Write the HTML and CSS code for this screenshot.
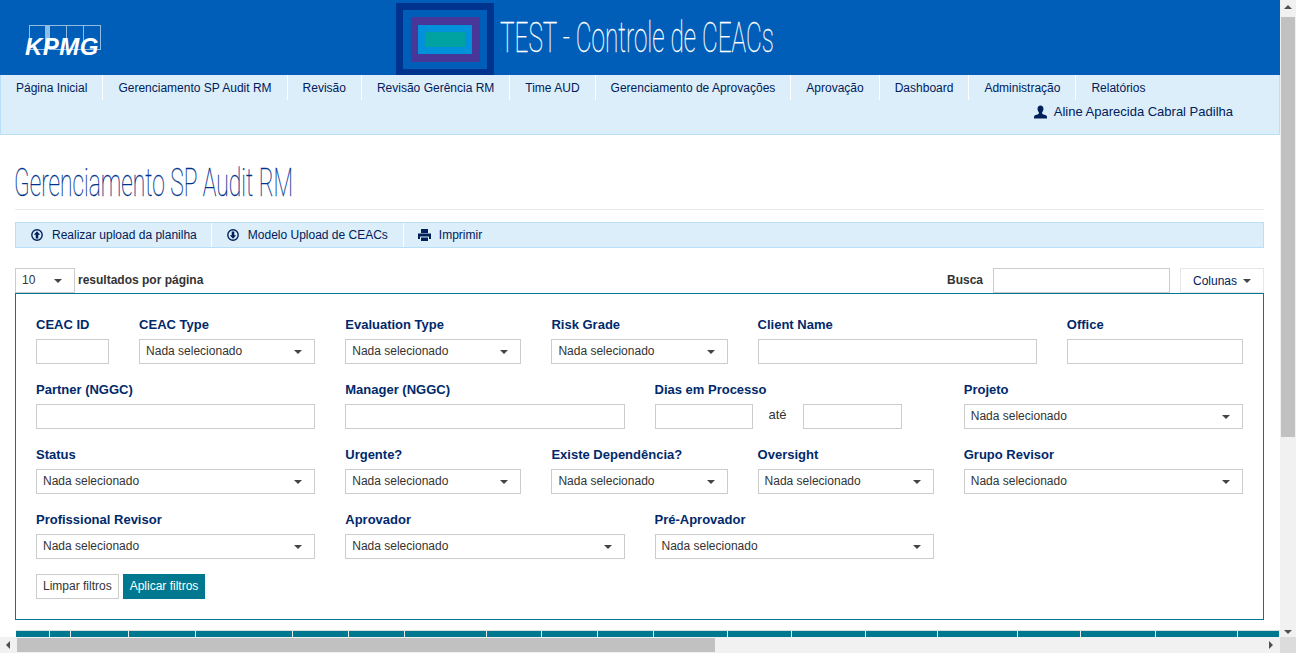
FILE: index.html

```html
<!DOCTYPE html>
<html lang="pt-BR">
<head>
  <meta charset="UTF-8" />
  <title>TEST - Controle de CEACs</title>
  <link rel="stylesheet" href="styles.css">
</head>
<body>
  <div class="page">
    <header class="top">
      <svg class="kpmg" width="80" height="36" viewBox="0 0 80 36">
        <rect x="4.5" y="0.5" width="16" height="24" fill="none" stroke="#8fbde6"/>
        <rect x="20" y="0" width="4" height="24" fill="#8fbde6"/>
        <rect x="24.5" y="0.5" width="17" height="24" fill="none" stroke="#8fbde6"/>
        <rect x="41.5" y="0.5" width="17" height="24" fill="none" stroke="#8fbde6"/>
        <rect x="58.5" y="0.5" width="17" height="24" fill="none" stroke="#8fbde6"/>
        <text x="0" y="30" class="kpmg-text">KPMG</text>
      </svg>
      <svg class="mark" width="98" height="72" viewBox="0 0 98 72">
        <rect width="98" height="72" fill="#00338d"/>
        <rect x="7" y="7" width="84" height="59" fill="#005eb8"/>
        <rect x="15" y="14" width="69" height="45" fill="#483698"/>
        <rect x="22" y="22" width="54" height="29" fill="#0091da"/>
        <rect x="29" y="29" width="40" height="15" fill="#00a3a1"/>
      </svg>
      <div class="app-title"><span>TEST - Controle de CEACs</span></div>
    </header>

    <nav class="menu">
      <ul class="menu-list">
        <li>Página Inicial</li>
        <li>Gerenciamento SP Audit RM</li>
        <li>Revisão</li>
        <li>Revisão Gerência RM</li>
        <li>Time AUD</li>
        <li>Gerenciamento de Aprovações</li>
        <li>Aprovação</li>
        <li>Dashboard</li>
        <li>Administração</li>
        <li>Relatórios</li>
      </ul>
      <div class="user">
        <svg width="13" height="14" viewBox="0 0 14 14"><path fill="#00205b" d="M7 0c2 0 3.200 1.500 3.200 3.600 0 1.500-.6 2.900-1.400 3.700v1.200c0 .5 1.200 1 2.400 1.500 1.300.5 2.800 1 2.800 2V14H0v-2c0-1 1.500-1.500 2.800-2 1.200-.5 2.400-1 2.400-1.500V7.300C4.400 6.500 3.800 5.100 3.800 3.600 3.800 1.500 5 0 7 0z"/></svg>
        <span>Aline Aparecida Cabral Padilha</span>
      </div>
    </nav>

    <main class="content">
      <h1 class="page-title"><span>Gerenciamento SP Audit RM</span></h1>

      <div class="toolbar">
        <a class="tool tool-upload">
          <svg width="12" height="12" viewBox="0 0 12 12"><circle cx="6" cy="6" r="5.200" fill="none" stroke="#00205b" stroke-width="1.400"/><path fill="#00205b" d="M6 2.200 9.200 5.800H7.300V9.400H4.700V5.800H2.800z"/></svg>
          Realizar upload da planilha
        </a>
        <a class="tool">
          <svg width="12" height="12" viewBox="0 0 12 12"><circle cx="6" cy="6" r="5.200" fill="none" stroke="#00205b" stroke-width="1.400"/><path fill="#00205b" d="M6 9.800 2.800 6.200H4.700V2.600H7.300V6.200H9.200z"/></svg>
          Modelo Upload de CEACs
        </a>
        <a class="tool tool-print">
          <svg width="13" height="12" viewBox="0 0 13 12"><path fill="#00205b" d="M3 0h7v4H3zM0 4.500h13V10h-2V7.500H2V10H0zM3 8.500h7V12H3z"/></svg>
          Imprimir
        </a>
      </div>

      <div class="table-top">
        <div class="length">
          <div class="picker picker-length"><span>10</span><i class="caret"></i></div>
          <span class="length-label">resultados por página</span>
        </div>
        <div class="search">
          <label class="search-label">Busca</label>
          <input class="text-input search-input" type="text">
          <button class="columns-btn">Colunas <i class="caret"></i></button>
        </div>
      </div>

      <section class="filters">
        <div class="filter-grid">
          <div class="field span1"><label>CEAC ID</label><input class="text-input" type="text"></div>
          <div class="field span2"><label>CEAC Type</label><div class="picker"><span>Nada selecionado</span><i class="caret"></i></div></div>
          <div class="field span2"><label>Evaluation Type</label><div class="picker"><span>Nada selecionado</span><i class="caret"></i></div></div>
          <div class="field span2"><label>Risk Grade</label><div class="picker"><span>Nada selecionado</span><i class="caret"></i></div></div>
          <div class="field span3"><label>Client Name</label><input class="text-input" type="text"></div>
          <div class="field span2"><label>Office</label><input class="text-input" type="text"></div>

          <div class="field span3"><label>Partner (NGGC)</label><input class="text-input" type="text"></div>
          <div class="field span3"><label>Manager (NGGC)</label><input class="text-input" type="text"></div>
          <div class="field span3">
            <label>Dias em Processo</label>
            <div class="range">
              <input class="text-input" type="text">
              <span class="range-sep">até</span>
              <input class="text-input" type="text">
            </div>
          </div>
          <div class="field span3"><label>Projeto</label><div class="picker"><span>Nada selecionado</span><i class="caret"></i></div></div>

          <div class="field span3"><label>Status</label><div class="picker"><span>Nada selecionado</span><i class="caret"></i></div></div>
          <div class="field span2"><label>Urgente?</label><div class="picker"><span>Nada selecionado</span><i class="caret"></i></div></div>
          <div class="field span2"><label>Existe Dependência?</label><div class="picker"><span>Nada selecionado</span><i class="caret"></i></div></div>
          <div class="field span2"><label>Oversight</label><div class="picker"><span>Nada selecionado</span><i class="caret"></i></div></div>
          <div class="field span3"><label>Grupo Revisor</label><div class="picker"><span>Nada selecionado</span><i class="caret"></i></div></div>

          <div class="field span3"><label>Profissional Revisor</label><div class="picker"><span>Nada selecionado</span><i class="caret"></i></div></div>
          <div class="field span3"><label>Aprovador</label><div class="picker"><span>Nada selecionado</span><i class="caret"></i></div></div>
          <div class="field span3"><label>Pré-Aprovador</label><div class="picker"><span>Nada selecionado</span><i class="caret"></i></div></div>
        </div>
        <div class="filter-actions">
          <button class="btn-clear">Limpar filtros</button>
          <button class="btn-apply">Aplicar filtros</button>
        </div>
      </section>

      <div class="table-head">
        <div></div><div></div><div></div><div></div><div></div><div></div><div></div><div></div><div></div><div></div>
        <div></div><div></div><div></div><div></div><div></div><div></div><div></div><div></div><div></div><div></div>
      </div>
    </main>
  </div>

  <div class="scroll-v">
    <i class="arrow-up"></i>
    <div class="thumb-v"></div>
    <i class="arrow-down"></i>
  </div>
  <div class="scroll-h">
    <i class="arrow-left"></i>
    <div class="thumb-h"></div>
    <i class="arrow-right"></i>
  </div>
  <div class="scroll-corner"></div>
</body>
</html>
```

FILE: styles.css

```css
html, body {
  margin: 0;
  height: 653px;
  overflow: hidden;
}
body {
  font-family: "Liberation Sans", Arial, sans-serif;
  font-size: 12px;
  background-color: #fff;
  color: #333;
}
.page {
  width: 1280px;
}

/* header */
.top {
  display: flex;
  height: 75px;
  background-color: #005eb8;
}
.kpmg {
  margin: 25px 0 0 25px;
}
.kpmg-text {
  font-family: "Liberation Sans", Arial, sans-serif;
  font-size: 24px;
  font-weight: bold;
  font-style: italic;
  letter-spacing: .5px;
  fill: #fff;
}
.mark {
  margin: 3px 0 0 291px;
}
.app-title {
  margin-left: 6px;
  color: #fff;
  font-family: Roboto, sans-serif;
  font-weight: 100;
  font-size: 42px;
  line-height: 75px;
  white-space: nowrap;
  -webkit-text-stroke: .3px #fff;
}
.app-title span {
  display: inline-block;
  transform: scaleX(0.58);
  transform-origin: left center;
}

/* menu */
.menu {
  height: 59px;
  background-color: #dceef9;
  border: 1px solid #b9e0f7;
  border-top: 0;
}
.menu-list {
  display: flex;
  margin: 0;
  padding: 0;
  list-style: none;
}
.menu-list li {
  padding-top: 1px;
  padding-left: 15px;
  padding-right: 15px;
  line-height: 24px;
  color: #00205b;
  border-right: 1px solid #fff;
  white-space: nowrap;
}
.menu-list li:last-child {
  border-right: 0;
}
.user {
  display: flex;
  justify-content: flex-end;
  align-items: center;
  gap: 7px;
  margin: 4px 46px 0 0;
  font-size: 13px;
  color: #00205b;
}

/* content */
.content {
  padding: 0 16px 0 15px;
}
.page-title {
  margin: 0;
  padding: 28px 0 6px;
  border-bottom: 1px solid #e6eaee;
  color: #00338d;
  font-family: Roboto, sans-serif;
  font-weight: 100;
  font-size: 38px;
  line-height: 40px;
  white-space: nowrap;
  -webkit-text-stroke: .3px #00338d;
}
.page-title span {
  display: inline-block;
  margin-left: -1px;
  transform: scaleX(0.6);
  transform-origin: left center;
}
.toolbar {
  display: flex;
  height: 24px;
  margin-top: 12px;
  background-color: #dceef9;
  border: 1px solid #b9e0f7;
}
.tool {
  display: flex;
  align-items: center;
  gap: 9px;
  padding: 0 15px;
  border-right: 1px solid #fff;
  color: #00205b;
}
.tool-upload {
  padding-right: 14px;
}
.tool-print {
  padding-left: 14px;
  gap: 8px;
  border-right: 0;
}

/* length, search */
.table-top {
  display: flex;
  justify-content: space-between;
  margin-top: 20px;
  height: 25px;
}
.length, .search {
  display: flex;
  align-items: center;
}
.picker {
  display: flex;
  justify-content: space-between;
  align-items: center;
  box-sizing: border-box;
  height: 25px;
  padding: 0 12px 2px 6px;
  background-color: #fff;
  border: 1px solid #ccc;
  color: #333;
}
.picker .caret {
  margin-top: 2px;
}
.picker-length {
  width: 60px;
}
.length-label {
  margin-left: 3px;
  margin-bottom: 2px;
  font-weight: bold;
}
.search-label {
  margin-right: 10px;
  margin-bottom: 1px;
  font-weight: bold;
}
.search .search-input {
  width: 177px;
}
.columns-btn {
  display: flex;
  justify-content: center;
  align-items: center;
  gap: 6px;
  box-sizing: border-box;
  width: 84px;
  height: 25px;
  margin-left: 10px;
  padding: 0;
  background-color: #fff;
  border: 1px solid #e1e7ea;
  font: inherit;
  color: #00205b;
}
.caret {
  display: inline-block;
  border-top: 4px solid #444;
  border-left: 4px solid transparent;
  border-right: 4px solid transparent;
}
.text-input {
  box-sizing: border-box;
  height: 25px;
  width: 100%;
  margin: 0;
  padding: 0 6px;
  background-color: #fff;
  border: 1px solid #ccc;
  border-radius: 0;
  outline: 0;
}

/* filters */
.filters {
  box-sizing: border-box;
  height: 327px;
  padding: 23px 20px 0;
  border: 1px solid #00788f;
}
.filter-grid {
  display: grid;
  grid-template-columns: repeat(12, 1fr);
  column-gap: 30px;
  row-gap: 18px;
}
.span1 { grid-column: span 1; }
.span2 { grid-column: span 2; }
.span3 { grid-column: span 3; }
.field label {
  display: block;
  height: 18px;
  margin-bottom: 4px;
  line-height: 16px;
  font-size: 13px;
  font-weight: bold;
  color: #00296b;
}
.range {
  display: grid;
  grid-template-columns: 98px 50px 99px;
  align-items: center;
}
.range-sep {
  text-align: center;
  font-size: 13px;
  margin-top: -4px;
}
.filter-actions {
  display: flex;
  gap: 4px;
  margin-top: 15px;
}
.filter-actions button {
  box-sizing: border-box;
  height: 25px;
  padding: 0 6px 2px;
  font: inherit;
  border: 1px solid #ccc;
  background-color: #fff;
  color: #333;
}
.filter-actions .btn-apply {
  background-color: #00788f;
  border-color: #00788f;
  color: #fff;
}

/* table head, cut off by the window */
.table-head {
  display: grid;
  grid-template-columns: 34px 21px 58px 67px 97px 56px 56px 82px 55px 56px 56px 74px 64px 74px 72px 80px 63px 75px 82px 1fr;
  height: 6px;
  margin-top: 10px;
  margin-left: 1px;
  margin-right: -16px;
  border-top: 1px solid #ddd;
  overflow: hidden;
}
.table-head div {
  background-color: #00788f;
  border-right: 1px solid #e8eef0;
}

/* window scrollbars */
.scroll-v {
  position: fixed;
  top: 0;
  right: 0;
  width: 16px;
  height: 637px;
  background-color: #f1f1f1;
}
.thumb-v {
  position: absolute;
  top: 17px;
  left: 1px;
  width: 14px;
  height: 420px;
  background-color: #c1c1c1;
}
.scroll-h {
  position: fixed;
  left: 0;
  bottom: 0;
  width: 1280px;
  height: 16px;
  background-color: #f1f1f1;
}
.thumb-h {
  position: absolute;
  top: 1px;
  left: 17px;
  width: 698px;
  height: 14px;
  background-color: #c1c1c1;
}
.scroll-corner {
  position: fixed;
  right: 0;
  bottom: 0;
  width: 16px;
  height: 16px;
  background-color: #dcdcdc;
}
.arrow-up, .arrow-down, .arrow-left, .arrow-right {
  position: absolute;
  width: 0;
  height: 0;
  border: 4px solid transparent;
}
.arrow-up { top: 1px; left: 4px; border-bottom-color: #505050; }
.arrow-down { bottom: -1px; left: 4px; border-top-color: #505050; }
.arrow-left { left: 2px; top: 4px; border-right-color: #505050; }
.arrow-right { right: 3px; top: 4px; border-left-color: #505050; }
```
